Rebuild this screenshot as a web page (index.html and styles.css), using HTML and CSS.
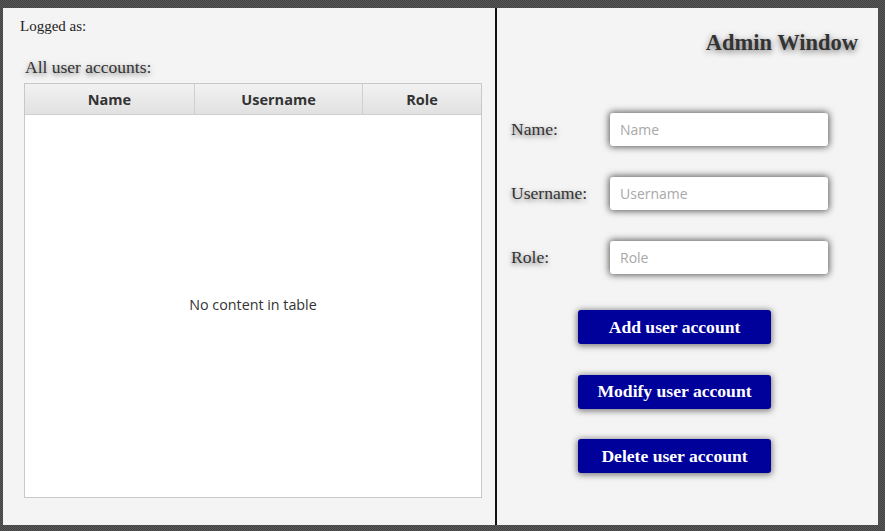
FILE: index.html
```html
<!DOCTYPE html>
<html>
<head>
<meta charset="utf-8">
<link rel="stylesheet" href="styles.css">
</head>
<body>
<div class="frame">
  <div class="window">
    <div class="left">
      <div class="logged">Logged as:</div>
      <div class="heading">All user accounts:</div>
      <div class="table">
        <div class="thead">
          <div class="th c1">Name</div>
          <div class="th c2">Username</div>
          <div class="th c3">Role</div>
        </div>
        <div class="tbody">No content in table</div>
      </div>
    </div>
    <div class="divider"></div>
    <div class="right">
      <div class="title">Admin Window</div>
      <div class="form">
        <div class="row"><span class="label">Name:</span><input class="field" placeholder="Name"></div>
        <div class="row"><span class="label">Username:</span><input class="field" placeholder="Username"></div>
        <div class="row"><span class="label">Role:</span><input class="field" placeholder="Role"></div>
      </div>
      <div class="buttons">
        <button class="btn">Add user account</button>
        <button class="btn">Modify user account</button>
        <button class="btn">Delete user account</button>
      </div>
    </div>
  </div>
</div>
</body>
</html>
```
FILE: styles.css
```css
html, body {
  margin: 0;
  padding: 0;
}
body {
  width: 885px;
  height: 531px;
  overflow: hidden;
  background-color: #4a4a4a;
  background-image: repeating-conic-gradient(#575757 0 25%, #434343 0 50%);
  background-size: 2px 2px;
}
.frame {
  padding: 8px 7px 6px 3px;
  height: 517px;
}
.window {
  display: flex;
  height: 517px;
  background: #f4f4f4;
}
.left {
  width: 492px;
  display: flex;
  flex-direction: column;
}
.logged {
  font-family: "Liberation Serif", serif;
  font-size: 15px;
  color: #222;
  margin: 10px 0 0 17px;
  line-height: 17px;
}
.heading {
  font-family: "Liberation Serif", serif;
  font-size: 17.5px;
  color: #333;
  margin: 22px 0 0 22px;
  line-height: 20px;
  text-shadow: 0 2px 5px rgba(0,0,0,0.5);
}
.table {
  margin: 6px 0 0 21px;
  width: 456px;
  height: 413px;
  border: 1px solid #c8c8c8;
  background: #fff;
  display: flex;
  flex-direction: column;
}
.thead {
  display: flex;
  height: 30px;
  background: linear-gradient(#f2f2f2, #e1e1e1);
  border-bottom: 1px solid #cfcfcf;
}
.th {
  font-family: "Open Sans", sans-serif;
  font-weight: 700;
  font-size: 14.5px;
  color: #333;
  display: flex;
  align-items: center;
  justify-content: center;
  border-right: 1px solid #cfcfcf;
}
.c1 { width: 169px; }
.c2 { width: 167px; }
.c3 { flex: 1; border-right: none; }
.tbody {
  flex: 1;
  display: flex;
  align-items: center;
  justify-content: center;
  font-family: "Open Sans", sans-serif;
  font-size: 14.3px;
  color: #333;
  padding-bottom: 4px;
}
.divider {
  width: 2px;
  background: #111;
}
.right {
  flex: 1;
  display: flex;
  flex-direction: column;
}
.title {
  font-family: "Liberation Serif", serif;
  font-weight: 700;
  font-size: 22.5px;
  color: #333;
  text-align: right;
  margin: 23px 20px 0 0;
  line-height: 24px;
  text-shadow: 0 2px 6px rgba(0,0,0,0.55);
}
.form {
  margin: 58px 0 0 14px;
  display: flex;
  flex-direction: column;
  gap: 31px;
}
.row {
  display: flex;
  align-items: center;
  height: 33px;
}
.label {
  width: 99px;
  font-family: "Liberation Serif", serif;
  font-size: 17.6px;
  color: #333;
  text-shadow: 0 2px 5px rgba(0,0,0,0.5);
}
.field {
  width: 218px;
  height: 33px;
  box-sizing: border-box;
  border: none;
  border-radius: 3px;
  background: #fff;
  box-shadow: 0 0 7px 1px rgba(0,0,0,0.65);
  padding: 0 10px;
  font-family: "Open Sans", sans-serif;
  font-size: 14px;
  outline: none;
}
.field::placeholder {
  color: #a8a8a8;
}
.buttons {
  margin: 36px 0 0 81px;
  display: flex;
  flex-direction: column;
  gap: 30.5px;
}
.btn {
  width: 193px;
  height: 34px;
  border: none;
  border-radius: 3px;
  background: #00009a;
  color: #fff;
  font-family: "Liberation Serif", serif;
  font-weight: 700;
  font-size: 17.6px;
  box-shadow: 0 1px 6px 1px rgba(0,0,0,0.5);
  padding: 0;
}
```
